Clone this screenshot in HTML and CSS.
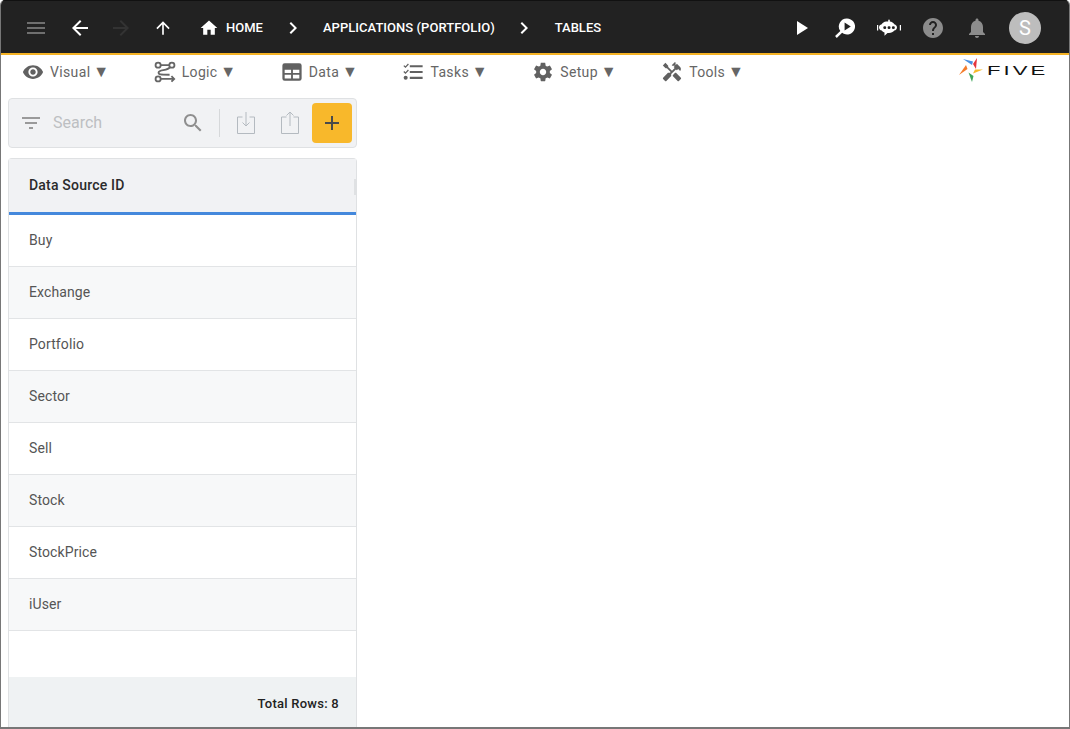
FILE: index.html
```html
<!DOCTYPE html>
<html lang="en">
<head>
<meta charset="utf-8">
<title>Tables</title>
<link rel="stylesheet" href="styles.css">
</head>
<body>
<div class="window">
  <header class="appbar">
    <div class="nav-left">
      <svg class="ic menu" viewBox="0 0 24 24"><path fill="#6f6f6f" d="M3 18h18v-2H3v2zm0-5h18v-2H3v2zm0-7v2h18V6H3z"/></svg>
      <svg class="ic back" viewBox="0 0 24 24"><path fill="#fff" d="M20 11H7.830l5.590-5.590L12 4l-8 8 8 8 1.410-1.410L7.830 13H20v-2z"/></svg>
      <svg class="ic fwd" viewBox="0 0 24 24"><path fill="#333" d="M12 4l-1.410 1.410L16.170 11H4v2h12.170l-5.580 5.590L12 20l8-8z"/></svg>
      <svg class="ic up" viewBox="0 0 24 24"><path fill="#fff" d="M4 12l1.410 1.410L11 7.830V20h2V7.830l5.580 5.590L20 12l-8-8z"/></svg>
      <svg class="ic home" viewBox="0 0 24 24"><path fill="#fff" d="M10 20v-6h4v6h5v-8h3L12 3 2 12h3v8z"/></svg>
      <span class="crumb c-home">HOME</span>
      <svg class="ic chev c1" viewBox="0 0 24 24"><path fill="#fff" d="M10 6L8.590 7.410 13.170 12l-4.580 4.590L10 18l6-6z"/></svg>
      <span class="crumb c-app">APPLICATIONS (PORTFOLIO)</span>
      <svg class="ic chev c2" viewBox="0 0 24 24"><path fill="#fff" d="M10 6L8.590 7.410 13.170 12l-4.580 4.590L10 18l6-6z"/></svg>
      <span class="crumb c-tab">TABLES</span>
    </div>
    <div class="nav-right">
      <svg class="ic" viewBox="0 0 24 24"><path fill="#fff" d="M8 5v14l11-7z"/></svg>
      <svg class="ic" viewBox="0 0 24 24"><path fill="#fff" fill-rule="evenodd" d="M14 2.500a8 8 0 1 1-4.900 14.300l-5.300 5.100-1.700-1.800 5.200-5A8 8 0 0 1 14 2.500zM11.600 6.600v7.800l6.200-3.900z"/></svg>
      <svg class="ic" viewBox="0 0 24 24"><g fill="#fff"><path d="M12 3.500c.5 0 .8.300.8.800v1.300c2.100.300 3.700 1.300 4.500 2.700 1.500.4 2.700 1.600 2.700 3.100 0 1.600-1.200 2.800-2.700 3.200-1.100 1.600-3.100 2.500-5.300 2.500h-1.500l-3 2.600v-3.100c-1.200-.4-2.200-1.100-2.800-2C3.200 14.200 2 13 2 11.400s1.200-2.700 2.700-3.100c.8-1.400 2.400-2.400 4.500-2.700h2V4.300c0-.5.300-.8.800-.8z"/><path d="M0 9h1.200v5.500H0zM22.800 9H24v5.500h-1.200z"/></g><g fill="#222"><rect x="6.300" y="10.300" width="2.900" height="2.600" rx="1.200"/><rect x="10.600" y="10.300" width="2.900" height="2.600" rx="1.200"/><rect x="14.900" y="10.300" width="2.900" height="2.600" rx="1.200"/></g></svg>
      <svg class="ic" viewBox="0 0 24 24"><path fill="#8c8c8c" d="M12 2C6.480 2 2 6.480 2 12s4.480 10 10 10 10-4.480 10-10S17.520 2 12 2zm1 17h-2v-2h2v2zm2.070-7.750l-.9.920C13.450 12.900 13 13.500 13 15h-2v-.5c0-1.100.450-2.100 1.170-2.830l1.240-1.260c.370-.360.590-.860.590-1.410 0-1.100-.900-2-2-2s-2 .900-2 2H8c0-2.210 1.790-4 4-4s4 1.790 4 4c0 .880-.360 1.680-.930 2.250z"/></svg>
      <svg class="ic" viewBox="0 0 24 24"><path fill="#8c8c8c" d="M12 22c1.100 0 2-.900 2-2h-4c0 1.100.890 2 2 2zm6-6v-5c0-3.070-1.640-5.640-4.500-6.320V4c0-.830-.670-1.500-1.500-1.500s-1.500.670-1.500 1.500v.680C7.630 5.360 6 7.920 6 11v5l-2 2v1h16v-1l-2-2z"/></svg>
      <span class="avatar">S</span>
    </div>
  </header>

  <nav class="menubar">
    <div class="menu-items">
      <div class="menu-item">
        <svg class="mi" viewBox="0 0 24 24"><path d="M12 4.500C7 4.500 2.730 7.610 1 12c1.730 4.390 6 7.500 11 7.500s9.270-3.110 11-7.500c-1.730-4.390-6-7.500-11-7.500zM12 17c-2.760 0-5-2.240-5-5s2.240-5 5-5 5 2.240 5 5-2.240 5-5 5zm0-8c-1.660 0-3 1.340-3 3s1.340 3 3 3 3-1.340 3-3-1.340-3-3-3z"/></svg>
        <span>Visual <span class="caret">▼</span></span>
      </div>
      <div class="menu-item">
        <svg class="mi" viewBox="0 0 24 24"><g fill="none" stroke="#666" stroke-width="2"><circle cx="4.500" cy="4.500" r="2.800"/><circle cx="19.500" cy="4.500" r="2.800"/><circle cx="4.500" cy="19.500" r="2.800"/><path d="M7.300 4.500h9.400M17.500 6.500C15 11 5.500 9 5 12.500c-.3 2.500 2 2.500 12 2.500M7.300 19.500H22M19 16.500l3 3-3 3"/></g></svg>
        <span>Logic <span class="caret">▼</span></span>
      </div>
      <div class="menu-item">
        <svg class="mi" viewBox="0 0 24 24"><path fill-rule="evenodd" d="M4 2.500h16a2.500 2.500 0 0 1 2.500 2.500v14a2.500 2.500 0 0 1-2.500 2.500H4A2.500 2.500 0 0 1 1.500 19V5A2.500 2.500 0 0 1 4 2.500zM4 9.500v3.500h7V9.500zm9 0v3.500h7V9.500zM4 15v4h7v-4zm9 0v4h7v-4z"/></svg>
        <span>Data <span class="caret">▼</span></span>
      </div>
      <div class="menu-item">
        <svg class="mi" viewBox="0 0 24 24"><path d="M8.500 4.500h14v2.400h-14zM8.500 10.800h14v2.400h-14zM8.500 17.100h14v2.400h-14zM2.500 4.500l1.300 1.200 2.700-2.900 1 1-3.700 3.900-2.300-2.200zM2.500 11l1.300 1.200 2.700-2.900 1 1-3.700 3.900-2.300-2.200z"/><circle cx="4" cy="18.300" r="2.200"/></svg>
        <span>Tasks <span class="caret">▼</span></span>
      </div>
      <div class="menu-item">
        <svg class="mi" viewBox="0 0 24 24"><path d="M19.430 12.980c.04-.32.07-.64.07-.98s-.03-.66-.07-.98l2.110-1.650c.19-.15.24-.42.120-.64l-2-3.460c-.12-.22-.39-.3-.61-.22l-2.490 1c-.52-.4-1.080-.73-1.690-.98l-.38-2.650C14.460 2.180 14.250 2 14 2h-4c-.25 0-.46.180-.49.420l-.38 2.650c-.61.250-1.170.59-1.690.98l-2.490-1c-.23-.09-.49 0-.61.220l-2 3.460c-.13.220-.07.490.12.640l2.110 1.650c-.04.32-.07.650-.07.980s.03.660.07.980l-2.110 1.650c-.19.150-.24.420-.12.640l2 3.460c.12.220.39.300.61.220l2.490-1c.52.400 1.080.730 1.690.980l.38 2.650c.03.240.24.420.49.420h4c.25 0 .46-.180.49-.420l.38-2.650c.61-.250 1.170-.590 1.690-.980l2.490 1c.23.090.49 0 .61-.220l2-3.460c.12-.220.070-.490-.12-.640l-2.110-1.650zM12 15.500c-1.930 0-3.500-1.570-3.500-3.500s1.570-3.500 3.500-3.500 3.500 1.570 3.500 3.500-1.570 3.500-3.500 3.500z"/></svg>
        <span>Setup <span class="caret">▼</span></span>
      </div>
      <div class="menu-item">
        <svg class="mi" viewBox="0 0 24 24"><path d="M21.670 18.170l-5.300-5.300h-.99l-2.540 2.540v.99l5.300 5.300c.39.390 1.020.390 1.410 0l2.120-2.120c.39-.38.390-1.020 0-1.410z"/><path d="M17.340 10.190l1.410-1.410 2.120 2.120c1.170-1.170 1.170-3.070 0-4.240l-3.540-3.540-1.410 1.410V1.710l-.7-.71-3.540 3.540.71.710h2.830l-1.410 1.410 1.060 1.060-2.890 2.890-4.130-4.130V5.060L4.830 2.040 2 4.870 5.030 7.900h1.410l4.130 4.130-.85.850H7.600l-5.300 5.300c-.39.390-.39 1.020 0 1.410l2.120 2.120c.39.390 1.020.390 1.410 0l5.300-5.300v-2.120l5.150-5.150 1.060 1.050z"/></svg>
        <span>Tools <span class="caret">▼</span></span>
      </div>
    </div>
    <div class="logo">
      <svg class="logo-mark" viewBox="0 0 24 24">
        <path fill="#4a90e2" d="M4 1l10 2.500-1 3.500z"/>
        <path fill="#e5343d" d="M18 0l-1 11-3-5z"/>
        <path fill="#f6b92b" d="M24 11.500l-10 4 2-4z"/>
        <path fill="#3fa65a" d="M13 24L9.500 14.500l5 3.500z"/>
        <path fill="#f47b2a" d="M0 17L7 7l1.500 4z"/>
      </svg>
      <span class="logo-text">FIVE</span>
    </div>
  </nav>

  <aside class="side">
    <div class="toolbar">
      <svg class="tb filter" viewBox="0 0 24 24"><path fill="#9a9a9a" d="M10 18h4v-2h-4v2zM3 6v2h18V6H3zm3 7h12v-2H6v2z"/></svg>
      <span class="search">Search</span>
      <svg class="tb mag" viewBox="0 0 24 24"><path fill="#8f8f8f" d="M15.500 14h-.79l-.28-.27C15.410 12.590 16 11.110 16 9.500 16 5.910 13.090 3 9.500 3S3 5.910 3 9.500 5.910 16 9.500 16c1.610 0 3.090-.59 4.230-1.570l.27.28v.79l5 4.990L20.490 19l-4.990-5zm-6 0C7.010 14 5 11.990 5 9.500S7.010 5 9.500 5 14 7.010 14 9.500 11.990 14 9.500 14z"/></svg>
      <span class="divider"></span>
      <svg class="tb imp" viewBox="0 0 24 24"><g fill="none" stroke="#b4bac0" stroke-width="1"><path d="M8.500 6H3.500v16.500h17V6h-5"/><path d="M12 1v14M8.500 11.500L12 15l3.500-3.500"/></g></svg>
      <svg class="tb exp" viewBox="0 0 24 24"><g fill="none" stroke="#b4bac0" stroke-width="1"><path d="M8.500 6H3.500v16.500h17V6h-5"/><path d="M12 15V1M8.500 4.500L12 1l3.500 3.500"/></g></svg>
      <button class="add" type="button"><svg viewBox="0 0 24 24"><path fill="#4a4a4a" d="M19 13h-6v6h-2v-6H5v-2h6V5h2v6h6v2z"/></svg></button>
    </div>
    <section class="table">
      <div class="thead">
        <span>Data Source ID</span>
        <i class="grip"></i>
      </div>
      <div class="tbody">
        <div class="row">Buy</div>
        <div class="row">Exchange</div>
        <div class="row">Portfolio</div>
        <div class="row">Sector</div>
        <div class="row">Sell</div>
        <div class="row">Stock</div>
        <div class="row">StockPrice</div>
        <div class="row">iUser</div>
      </div>
      <div class="tfoot">Total Rows: 8</div>
    </section>
  </aside>
</div>
</body>
</html>
```

FILE: styles.css
```css
* { box-sizing: border-box; }
html, body { margin: 0; height: 100%; background: #fff; overflow: hidden; }
body { font-family: Roboto, "Liberation Sans", sans-serif; }

.window {
  width: 1070px;
  height: 729px;
  display: flex;
  flex-direction: column;
  border-left: 1px solid #777;
  border-right: 1px solid #777;
  border-bottom: 2px solid #777;
  border-radius: 5px 5px 0 0;
  overflow: hidden;
  background: #fff;
}

.appbar {
  flex: none;
  height: 55px;
  padding-top: 1px;
  background: #222;
  border-top: 1px solid #111;
  border-bottom: 2px solid #f5b325;
  display: flex;
  align-items: center;
  justify-content: space-between;
}
.nav-left { display: flex; align-items: center; padding-left: 23px; }
.ic { width: 24px; height: 24px; flex: none; display: block; }
.back { margin-left: 20px; }
.fwd { margin-left: 17px; }
.up { width: 20px; height: 20px; margin-left: 20px; }
.home { width: 20px; height: 20px; margin-left: 26px; }
.crumb { color: #fff; font-size: 13px; font-weight: 500; white-space: nowrap; }
.c-home { margin-left: 7px; }
.chev { margin-left: 18px; }
.c-app { margin-left: 18px; letter-spacing: .04px; }
.c2 { margin-left: 17px; }
.c-tab { margin-left: 19px; }
.nav-right { display: flex; align-items: center; gap: 20px; padding-right: 28px; }
.avatar {
  width: 32px;
  height: 32px;
  border-radius: 50%;
  background: #bdbdbd;
  color: #fff;
  font-size: 20px;
  display: flex;
  align-items: center;
  justify-content: center;
}

.menubar {
  flex: none;
  height: 43px;
  display: flex;
  justify-content: space-between;
  align-items: flex-start;
  padding: 5px 24px 0 21px;
}
.menu-items { display: flex; gap: 44.6px; }
.menu-item {
  display: flex;
  align-items: center;
  gap: 6px;
  height: 24px;
  color: #666;
  font-size: 14px;
  letter-spacing: .35px;
  white-space: nowrap;
}
.caret { font-size: 16px; line-height: 14px; letter-spacing: 0; margin-left: -1px; }
.mi { width: 22px; height: 22px; fill: #616161; flex: none; }
.logo { display: flex; align-items: center; margin-top: -2px; gap: 4px; }
.logo-mark { width: 24px; height: 24px; flex: none; }
.logo-text {
  display: inline-block;
  width: 58px;
  font-family: "Liberation Sans", sans-serif;
  font-size: 13px;
  line-height: 13px;
  color: #111;
  letter-spacing: 1.800px;
  transform: scaleX(1.7);
  transform-origin: left center;
  white-space: nowrap;
}

.side {
  width: 349px;
  margin-left: 7px;
  flex: 1;
  min-height: 0;
  display: flex;
  flex-direction: column;
  gap: 10px;
}
.toolbar {
  flex: none;
  height: 50px;
  background: #f1f2f4;
  border: 1px solid #dfe1e3;
  border-radius: 4px;
  display: flex;
  align-items: center;
  padding-left: 10px;
}
.tb { flex: none; width: 24px; height: 24px; display: block; }
.search { width: 128px; margin-left: 10px; padding-bottom: 2px; color: #bdbfc2; font-size: 16px; }
.divider { width: 1px; height: 28px; background: #d6d8da; margin: 0 14px; }
.exp { margin-left: 20px; }
.add {
  width: 40px;
  height: 40px;
  margin-left: 10px;
  padding: 8px;
  border: 0;
  border-radius: 4px;
  background: #f8b82b;
}
.add svg { display: block; width: 24px; height: 24px; }

.table {
  flex: 1;
  min-height: 0;
  display: flex;
  flex-direction: column;
  border: 1px solid #dfe1e3;
  border-bottom: 0;
  border-radius: 4px 4px 0 0;
  font-size: 14px;
}
.thead {
  flex: none;
  height: 56px;
  padding-bottom: 2px;
  background: #f1f2f4;
  border-bottom: 3px solid #4488dc;
  display: flex;
  align-items: center;
  padding-left: 20px;
  position: relative;
  color: #2b2b2b;
  font-weight: 500;
  letter-spacing: .2px;
}
.grip {
  position: absolute;
  right: 0;
  top: 20px;
  width: 2px;
  height: 16px;
  background: #dfe1e3;
}
.tbody { flex: 1; min-height: 0; }
.row {
  height: 52px;
  padding-bottom: 2px;
  display: flex;
  align-items: center;
  padding-left: 20px;
  border-bottom: 1px solid #e2e4e6;
  color: #555;
  background: #fff;
  letter-spacing: .12px;
}
.row:nth-child(even) { background: #f7f8f9; }
.tfoot {
  flex: none;
  height: 50px;
  padding-top: 2px;
  background: #eff2f3;
  display: flex;
  align-items: center;
  justify-content: flex-end;
  padding-right: 17px;
  color: #222;
  font-size: 13px;
  font-weight: 500;
  letter-spacing: .25px;
}
```
